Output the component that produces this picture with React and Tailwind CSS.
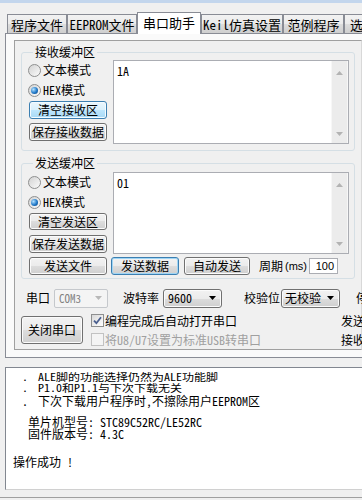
import React from "react";

const F = "font-['Noto_Sans_Mono_CJK_SC','Noto_Sans_CJK_SC',sans-serif]";
const SANS = "font-['Liberation_Sans','DejaVu_Sans',sans-serif]";
const GRAD = "bg-[linear-gradient(#f2f2f2_0%,#ebebeb_50%,#dddddd_50%,#cfcfcf_100%)]";
const BTN = `flex shrink-0 items-center justify-center rounded-[3px] border border-[#707070] ${GRAD} shadow-[inset_0_0_0_1px_#fbfbfb] leading-[14px]`;
const HOT = "flex shrink-0 items-center justify-center rounded-[3px] border border-[#3c7fb1] bg-[linear-gradient(#eaf6fd_0%,#d9f0fc_50%,#bee6fd_50%,#a7d9f5_100%)] shadow-[inset_0_0_0_1px_#f4fbff] leading-[14px]";
const FOCUS = `flex shrink-0 items-center justify-center rounded-[3px] border border-[#3c7fb1] ${GRAD} shadow-[inset_0_0_0_1px_#9fd5f5] leading-[14px]`;

function Down({ color = "#000" }) {
  return (
    <svg width="7" height="4" viewBox="0 0 7 4">
      <path d="M0 0h7L3.5 4z" fill={color} />
    </svg>
  );
}
function Up({ color = "#000" }) {
  return (
    <svg width="7" height="4" viewBox="0 0 7 4">
      <path d="M0 4h7L3.5 0z" fill={color} />
    </svg>
  );
}

function Tab({ w, sel, children, left }) {
  return (
    <div
      className={`${w} flex shrink-0 items-center ${left ? "justify-start pl-[5px]" : "justify-center"} whitespace-nowrap border border-b-0 border-[#898c95] text-[13px] leading-[14px] ${
        sel ? "-mb-px h-[22px] bg-white pb-[1px]" : `h-[19px] ${GRAD} pt-[2px]`
      }`}
    >
      {children}
    </div>
  );
}

function Radio({ checked, children }) {
  return (
    <div className="flex h-[20px] items-center">
      <span className="flex h-[13px] w-[13px] shrink-0 items-center justify-center rounded-full border border-[#8e8f8f] bg-[linear-gradient(135deg,#d2d2d2,#fbfbfb)]">
        {checked && (
          <span className="h-[7px] w-[7px] rounded-full bg-[radial-gradient(circle_at_35%_35%,#b4e2ff,#1f78c8_55%,#0c3e78)]" />
        )}
      </span>
      <span className="ml-[2px] leading-[14px]">{children}</span>
    </div>
  );
}

function TextBox({ h, text }) {
  return (
    <div className={`flex ${h} w-[236px] shrink-0 border border-[#abadb3] bg-white`}>
      <div className="flex-1 pl-[3px] pt-[3px] leading-[14px]">{text}</div>
      <div className="flex w-[17px] flex-col items-center justify-between border-x border-[#f7f7f7] bg-[#ececec] pb-[7px] pt-[10px]">
        <Up color="#b3b3b3" />
        <Down color="#b3b3b3" />
      </div>
    </div>
  );
}

function Check({ checked, disabled }) {
  return (
    <span
      className={`flex h-[13px] w-[13px] shrink-0 items-center justify-center border ${
        disabled ? "border-[#c2c2c2] bg-[#f4f4f4]" : "border-[#8e8f8f] bg-[linear-gradient(135deg,#d8d8d8,#ffffff)]"
      }`}
    >
      {checked && (
        <svg width="9" height="9" viewBox="0 0 9 9">
          <path d="M1 4.6 L3.4 7.2 L8 1.2" stroke="#4a5f8f" strokeWidth="1.8" fill="none" />
        </svg>
      )}
    </span>
  );
}

export default function App() {
  return (
    <div className={`h-[500px] w-[362px] overflow-hidden bg-[#f0f0f0] text-[12px] leading-[14px] text-black ${F}`}>
      <div className="h-[3px] bg-[#c3d6ed]" />

      {/* tabs */}
      <div className="relative z-10 mt-[9px] flex h-[21px] items-end pl-[7px]">
        <Tab w="w-[60px]">程序文件</Tab>
        <Tab w="w-[70px]">EEPROM文件</Tab>
        <Tab w="w-[64px]" sel>串口助手</Tab>
        <Tab w="w-[82px]">Keil仿真设置</Tab>
        <Tab w="w-[61px]">范例程序</Tab>
        <Tab w="w-[44px]" left>选项</Tab>
      </div>

      {/* tab panel */}
      <div className="ml-[5px] h-[325px] border border-r-0 border-[#898c95] bg-[#fafafa] pl-[8px] pt-[6px]">
        <div className="h-[310px] w-[348px] border border-[#a0a0a0] border-r-[#d8d8d8] bg-[#f0f0f0] pl-[6px] pt-[4px]">
          {/* receive */}
          <fieldset className="w-[334px] rounded-[3px] border border-[#d5dfe5] pb-[6px] pl-[6px] pr-[5px]">
            <legend className="ml-[5px] px-[2px] leading-[14px]">接收缓冲区</legend>
            <div className="flex">
              <div className="w-[85px] shrink-0 pt-[1px]">
                <Radio>文本模式</Radio>
                <Radio checked>HEX模式</Radio>
                <div className={`${HOT} ml-[1px] mt-[1px] h-[18px] w-[78px]`}>清空接收区</div>
                <div className={`${BTN} ml-[1px] mt-[4px] h-[18px] w-[78px]`}>保存接收数据</div>
              </div>
              <div className="mt-[1px]">
                <TextBox h="h-[84px]" text="1A" />
              </div>
            </div>
          </fieldset>

          {/* send */}
          <fieldset className="mt-[5px] w-[334px] rounded-[3px] border border-[#d5dfe5] pb-[3px] pl-[6px] pr-[5px]">
            <legend className="ml-[5px] px-[2px] leading-[14px]">发送缓冲区</legend>
            <div className="flex">
              <div className="w-[85px] shrink-0 pt-[2px]">
                <Radio>文本模式</Radio>
                <Radio checked>HEX模式</Radio>
                <div className={`${BTN} ml-[1px] mt-[1px] h-[17px] w-[78px]`}>清空发送区</div>
                <div className={`${BTN} ml-[1px] mt-[5px] h-[18px] w-[78px]`}>保存发送数据</div>
              </div>
              <div className="mt-[2px]">
                <TextBox h="h-[82px]" text="01" />
              </div>
            </div>
            <div className="mt-[3px] flex h-[18px] items-center">
              <div className={`${BTN} ml-[1px] h-[18px] w-[78px]`}>发送文件</div>
              <div className={`${FOCUS} ml-[4px] h-[18px] w-[68px]`}>发送数据</div>
              <div className={`${BTN} ml-[5px] h-[18px] w-[66px]`}>自动发送</div>
              <span className="ml-[9px]">周期</span>
              <span className={`${SANS} ml-[2px] text-[11px]`}>(ms)</span>
              <div className={`${SANS} ml-[2px] flex h-[16px] w-[29px] items-center justify-end border border-[#abadb3] bg-white pr-[3px] text-[11px]`}>
                100
              </div>
            </div>
          </fieldset>

          {/* controls */}
          <div className="mt-[9px] flex h-[20px] items-center whitespace-nowrap pl-[5px]">
            <span>串口</span>
            <div className="ml-[4px] flex h-[19px] w-[54px] shrink-0 items-center justify-between rounded-[2px] border border-[#c5c8cc] bg-[#f4f4f4] pl-[4px] pr-[5px] text-[#808080]">
              <span className="text-[11px]">COM3</span>
              <Down color="#b8b8b8" />
            </div>
            <span className="ml-[15px]">波特率</span>
            <div className={`${BTN} ml-[4px] h-[19px] w-[59px] !justify-between pl-[4px] pr-[5px]`}>
              <span>9600</span>
              <Down />
            </div>
            <span className="ml-[22px]">校验位</span>
            <div className={`${BTN} ml-[1px] h-[19px] w-[59px] !justify-between pl-[3px] pr-[5px]`}>
              <span>无校验</span>
              <Down />
            </div>
            <span className="ml-[16px]">停止位</span>
          </div>

          <div className="mt-[6px] flex items-start whitespace-nowrap">
            <div className={`${BTN} mt-[2px] h-[28px] w-[62px]`}>关闭串口</div>
            <div className="ml-[8px] w-[250px] shrink-0">
              <div className="flex h-[13px] items-center">
                <Check checked />
                <span className="ml-[1px]">编程完成后自动打开串口</span>
              </div>
              <div className="mt-[6px] flex h-[13px] items-center text-[#a0a0a0]">
                <Check disabled />
                <span className="ml-[1px]">将U8/U7设置为标准USB转串口</span>
              </div>
            </div>
            <div className="shrink-0">
              <div className="flex h-[13px] items-center">发送</div>
              <div className="mt-[6px] flex h-[13px] items-center">接收</div>
            </div>
          </div>
        </div>
      </div>

      {/* log */}
      <div className="ml-[5px] mt-[9px] h-[123px] border-l border-t border-b border-[#828790] border-b-[#d0d0d0] bg-white pt-[3px] whitespace-nowrap">
        <div className="flex h-[11px] origin-center scale-y-[0.85] items-center pl-[16px] leading-[11px]">
          <span className="inline-block w-[16px]">.</span>
          <span>ALE脚的功能选择仍然为ALE功能脚</span>
        </div>
        <div className="flex h-[12px] origin-center scale-y-[0.85] items-center pl-[16px] leading-[12px]">
          <span className="inline-block w-[16px]">.</span>
          <span>P1.0和P1.1与下次下载无关</span>
        </div>
        <div className="flex h-[14px] items-center pl-[16px]">
          <span className="inline-block w-[16px]">.</span>
          <span>下次下载用户程序时,不擦除用户EEPROM区</span>
        </div>
        <div className="h-[8px]" />
        <div className="flex h-[12px] items-center pl-[22px]">单片机型号: STC89C52RC/LE52RC</div>
        <div className="flex h-[12px] items-center pl-[22px]">固件版本号: 4.3C</div>
        <div className="h-[15px]" />
        <div className="flex h-[13px] items-center pl-[7px]">操作成功 !</div>
      </div>
      <div className="mt-[7px] border-t border-[#a0a0a0]" />
    </div>
  );
}
